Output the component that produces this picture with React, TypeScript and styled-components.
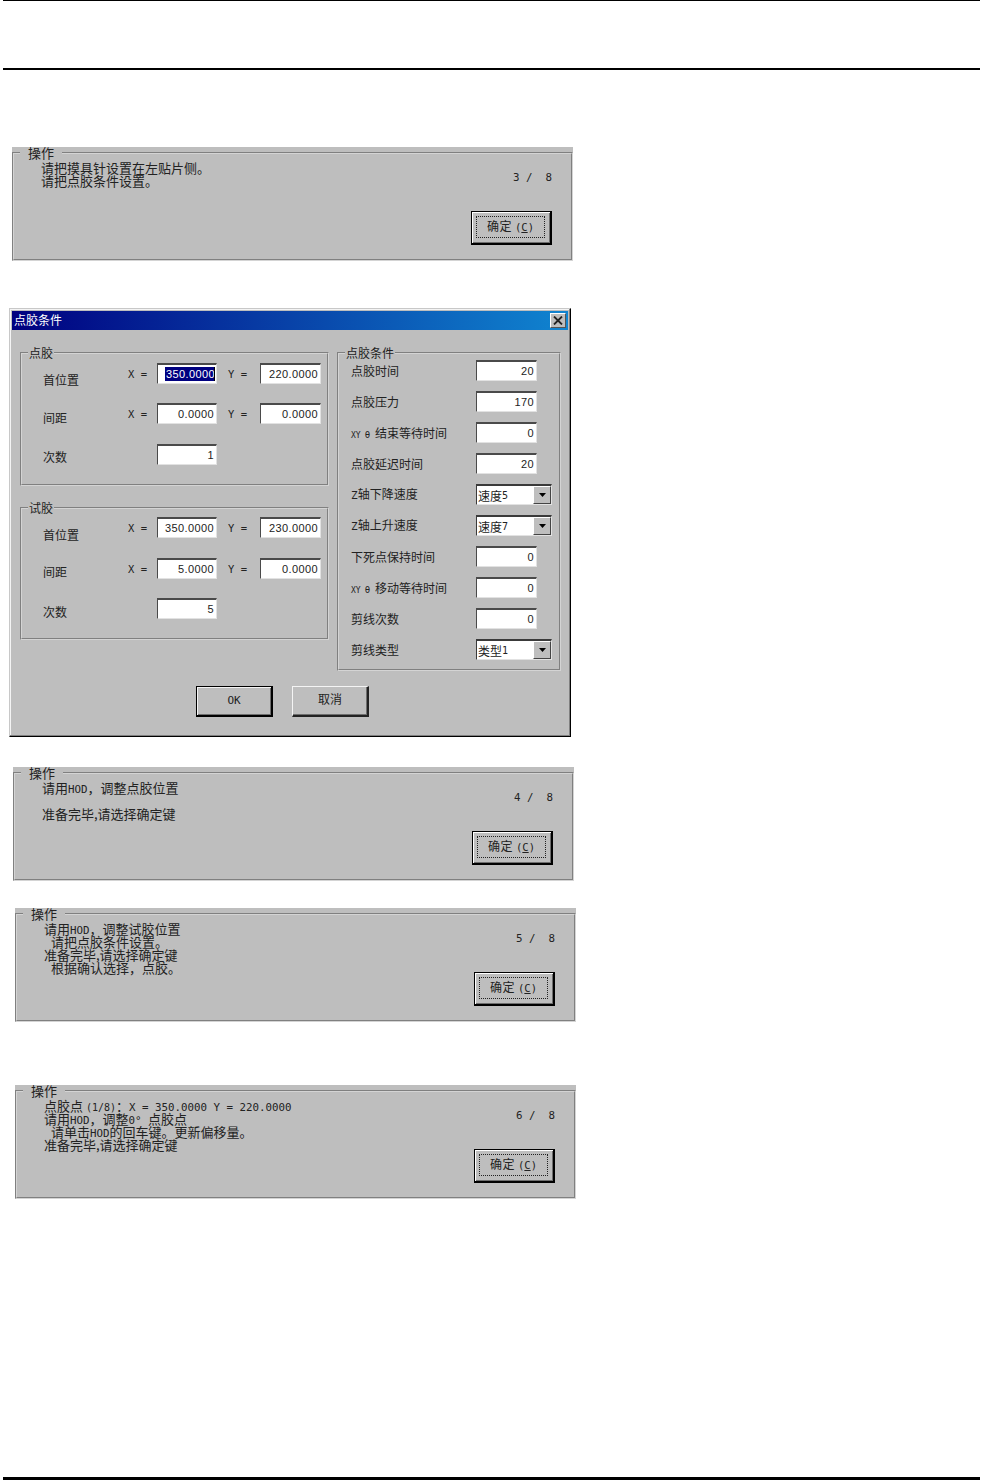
import React from 'react';
import styled, { createGlobalStyle } from 'styled-components';

const GRAY = '#bebebe';
const CJK = '"Noto Sans CJK SC", sans-serif';
const MONO = '"DejaVu Sans Mono", "Noto Sans CJK SC", monospace';
const SANS = '"Liberation Sans", "Noto Sans CJK SC", sans-serif';

const GlobalStyle = createGlobalStyle`
  html, body { margin: 0; padding: 0; background: #fff; }
  body { font-family: ${CJK}; color: #222; }
`;

const Page = styled.div`
  width: 982px;
  height: 1480px;
  display: flex;
  flex-direction: column;
  overflow: hidden;
`;

const Rule = styled.div<{ $size: number; $top?: number; $push?: boolean }>`
  flex: none;
  width: 977px;
  height: ${({ $size }) => $size}px;
  margin-left: 3px;
  margin-top: ${({ $push, $top }) => ($push ? 'auto' : `${$top ?? 0}px`)};
  background: #000;
`;

/* Operation panels */
const Panel = styled.div<{ $left: number; $top: number }>`
  flex: none;
  box-sizing: border-box;
  width: 561px;
  height: 114px;
  margin-left: ${({ $left }) => $left}px;
  margin-top: ${({ $top }) => $top}px;
  background: ${GRAY};
`;

const PanelFrame = styled.fieldset`
  box-sizing: border-box;
  height: 100%;
  min-width: 0;
  margin: 0;
  padding: 0;
  display: flex;
  justify-content: space-between;
  border: 2px groove #d4d4d4;
`;

const PanelLegend = styled.legend`
  margin-left: 6px;
  padding: 0 8px;
  font-size: 13px;
  line-height: 12px;
`;

const Message = styled.div`
  padding: 2px 0 0 27px;
  display: flex;
  flex-direction: column;
  font-size: 13px;
  line-height: 13px;
  white-space: pre;
`;

const MessageLine = styled.div<{ $indent?: boolean }>`
  height: 13px;
  padding-left: ${({ $indent }) => ($indent ? 7 : 0)}px;
`;

const Mono = styled.span<{ $size?: number; $underline?: boolean }>`
  font-family: ${MONO};
  font-size: ${({ $size }) => $size ?? 10.8}px;
  letter-spacing: 0;
  text-decoration: ${({ $underline }) => ($underline ? 'underline' : 'none')};
`;

const Theta = styled(Mono)`
  margin: 0 5px 0 4px;
`;

const PanelAside = styled.div`
  display: flex;
  flex-direction: column;
  align-items: flex-end;
  justify-content: space-between;
  padding: 12px 19px 14px 0;
`;

const Counter = styled.div`
  font-family: ${MONO};
  font-size: 10.8px;
  line-height: 14px;
  white-space: pre;
`;

const ConfirmButton = styled.button`
  box-sizing: border-box;
  width: 81px;
  height: 34px;
  padding: 4px 5px 5px 4px;
  display: flex;
  border: 1px solid #000;
  border-bottom-width: 2px;
  border-right-width: 2px;
  background: ${GRAY};
  box-shadow: inset 1px 1px #fff, inset -1px -1px #6e6e6e;
  color: #222;
  font-family: ${CJK};
  font-size: 12px;
  letter-spacing: 0.5px;
  line-height: 14px;
`;

const ConfirmFocus = styled.span`
  flex: 1;
  padding-bottom: 2px;
  display: flex;
  align-items: center;
  justify-content: center;
  gap: 3px;
  border: 1px dotted #222;
`;

/* Dialog */
const Dialog = styled.div`
  flex: none;
  box-sizing: border-box;
  width: 562px;
  height: 429px;
  margin-left: 9px;
  margin-top: 47px;
  padding: 2px;
  display: flex;
  flex-direction: column;
  border: 1px solid;
  border-color: #c8c8c8 #000 #000 #c8c8c8;
  background: ${GRAY};
  box-shadow: inset -1px -1px #808080, inset 1px 1px #f4f4f4;
`;

const TitleBar = styled.div`
  flex: none;
  box-sizing: border-box;
  height: 19px;
  padding: 0 2px;
  display: flex;
  align-items: center;
  justify-content: space-between;
  background: linear-gradient(90deg, #000080, #1084d0);
  color: #fff;
  font-size: 12px;
  line-height: 15px;
`;

const TitleText = styled.span`
  padding-bottom: 2px;
`;

const CloseButton = styled.div`
  width: 16px;
  height: 15px;
  box-sizing: border-box;
  display: flex;
  align-items: center;
  justify-content: center;
  background: ${GRAY};
  border: 1px solid;
  border-color: #fff #555 #555 #fff;
`;

const DialogBody = styled.div`
  flex: 1;
  padding: 16px 7px 0 8px;
  display: flex;
  flex-direction: column;
`;

const Columns = styled.div`
  display: flex;
  gap: 8px;
`;

const LeftColumn = styled.div`
  flex: none;
  display: flex;
  flex-direction: column;
  gap: 15px;
  width: 309px;
`;

const Group = styled.fieldset<{ $height: number; $width?: number }>`
  flex: none;
  box-sizing: border-box;
  width: ${({ $width }) => ($width ? `${$width}px` : 'auto')};
  height: ${({ $height }) => $height}px;
  min-width: 0;
  margin: 0;
  padding: 0;
  border: 2px groove #d4d4d4;
`;

const GroupLegend = styled.legend`
  margin-left: 6px;
  padding: 0 1px;
  font-size: 12px;
  line-height: 14px;
`;

const PointRows = styled.div`
  padding-left: 21px;
`;

const PointRow = styled.div<{ $top: number }>`
  display: flex;
  align-items: center;
  height: 21px;
  margin-top: ${({ $top }) => $top}px;
`;

const RowLabel = styled.div<{ $drop: number }>`
  align-self: flex-start;
  width: 85px;
  padding-top: ${({ $drop }) => $drop}px;
  font-size: 12px;
  line-height: 14px;
  white-space: nowrap;
`;

const Axis = styled.div<{ $width: number; $indent?: number }>`
  box-sizing: border-box;
  width: ${({ $width }) => $width}px;
  padding-left: ${({ $indent }) => $indent ?? 0}px;
  font-family: ${MONO};
  font-size: 10.5px;
  white-space: pre;
`;

const Field = styled.div<{ $width?: number }>`
  flex: none;
  box-sizing: border-box;
  width: ${({ $width }) => $width ?? 61}px;
  height: 21px;
  padding-right: 2px;
  display: flex;
  align-items: center;
  justify-content: flex-end;
  overflow: hidden;
  border-style: solid;
  border-width: 2px 1px 1px 1px;
  border-color: #4a4a4a #e2e2e2 #e2e2e2 #4a4a4a;
  background: #fff;
  font-family: ${SANS};
  font-size: 11px;
  letter-spacing: 0.4px;
`;

const Selected = styled.span`
  display: block;
  flex: none;
  box-sizing: border-box;
  width: 50px;
  height: 14px;
  margin-right: -1px;
  padding-left: 1px;
  line-height: 14px;
  overflow: hidden;
  white-space: nowrap;
  background: #000080;
  color: #fff;
  border-right: 1px solid #000;
`;

const SettingsRows = styled.div`
  padding-left: 12px;
  display: flex;
  flex-direction: column;
  gap: 10px;
`;

const SettingRow = styled.div`
  display: flex;
  align-items: center;
  height: 21px;
`;

const SettingLabel = styled.div`
  width: 125px;
  font-size: 12px;
  line-height: 14px;
  white-space: pre;
`;

const XySettingLabel = styled(SettingLabel)`
  padding-top: 3px;
`;

const Combo = styled.div`
  box-sizing: border-box;
  width: 76px;
  height: 21px;
  display: flex;
  align-items: stretch;
  border-style: solid;
  border-width: 2px 1px 1px 1px;
  border-color: #3a3a3a #e2e2e2 #e2e2e2 #3a3a3a;
  background: #fff;
  font-size: 12px;
`;

const ComboValue = styled.div`
  flex: 1;
  padding-left: 1px;
  display: flex;
  align-items: center;
  white-space: pre;
`;

const ComboArrow = styled.div`
  width: 16px;
  display: flex;
  align-items: center;
  justify-content: center;
  background: ${GRAY};
  border: 1px solid;
  border-color: #fff #444 #444 #fff;
`;

const DialogActions = styled.div`
  margin-top: 15px;
  padding-left: 176px;
  display: flex;
  gap: 19px;
`;

const DialogButton = styled.button<{ $isDefault?: boolean }>`
  box-sizing: border-box;
  width: 77px;
  height: 31px;
  padding: 0 0 5px;
  border: 1px solid;
  border-color: ${({ $isDefault }) => ($isDefault ? '#000' : '#f4f4f4 #222 #222 #f4f4f4')};
  border-bottom-width: 2px;
  border-right-width: 2px;
  background: ${GRAY};
  box-shadow: ${({ $isDefault }) =>
    $isDefault ? 'inset 1px 1px #f4f4f4, inset -1px -1px #6e6e6e' : 'inset -1px -1px #6e6e6e'};
  color: #222;
  font-family: ${CJK};
  font-size: 12px;
`;

const Arrow = () => (
  <svg width="7" height="4" viewBox="0 0 7 4">
    <polygon points="0,0 7,0 3.5,4" fill="#000" />
  </svg>
);

const CloseIcon = () => (
  <svg width="10" height="9" viewBox="0 0 10 9">
    <path d="M1 0.5 L9 8.5 M9 0.5 L1 8.5" stroke="#222" strokeWidth="1.8" fill="none" />
  </svg>
);

interface IOperationPanelProps {
  left: number;
  top: number;
  step: string;
  children: React.ReactNode;
}

const OperationPanel = ({ left, top, step, children }: IOperationPanelProps) => (
  <Panel $left={left} $top={top}>
    <PanelFrame>
      <PanelLegend>操作</PanelLegend>
      <Message>{children}</Message>
      <PanelAside>
        <Counter>{step}</Counter>
        <ConfirmButton>
          <ConfirmFocus>
            确定
            <span>
              <Mono $size={10.5}>(</Mono>
              <Mono $size={10.5} $underline>C</Mono>
              <Mono $size={10.5}>)</Mono>
            </span>
          </ConfirmFocus>
        </ConfirmButton>
      </PanelAside>
    </PanelFrame>
  </Panel>
);

const XyLabel = ({ text }: { text: string }) => (
  <XySettingLabel>
    <Mono $size={8}>XY</Mono>
    <Theta $size={9}>θ</Theta>
    {text}
  </XySettingLabel>
);

const ZLabel = ({ text }: { text: string }) => (
  <SettingLabel>
    <Mono $size={11}>Z</Mono>
    {text}
  </SettingLabel>
);

interface ICoordRowProps {
  label: string;
  x: React.ReactNode;
  y: string;
  top: number;
  drop: number;
}

const CoordRow = ({ label, x, y, top, drop }: ICoordRowProps) => (
  <PointRow $top={top}>
    <RowLabel $drop={drop}>{label}</RowLabel>
    <Axis $width={29}>X =</Axis>
    <Field $width={60}>{x}</Field>
    <Axis $width={43} $indent={11}>
      Y =
    </Axis>
    <Field>{y}</Field>
  </PointRow>
);

const CountRow = ({ value, top, drop }: { value: string; top: number; drop: number }) => (
  <PointRow $top={top}>
    <RowLabel $drop={drop}>次数</RowLabel>
    <Axis $width={29} />
    <Field $width={60}>{value}</Field>
  </PointRow>
);

const App = () => (
  <Page>
    <GlobalStyle />
    <Rule $size={1} />
    <Rule $size={2} $top={67} />

    <OperationPanel left={12} top={77} step={'3 /  8'}>
      <MessageLine>请把摸具针设置在左贴片侧。</MessageLine>
      <MessageLine>请把点胶条件设置。</MessageLine>
    </OperationPanel>

    <Dialog>
      <TitleBar>
        <TitleText>点胶条件</TitleText>
        <CloseButton>
          <CloseIcon />
        </CloseButton>
      </TitleBar>
      <DialogBody>
        <Columns>
          <LeftColumn>
            <Group $height={140}>
              <GroupLegend>点胶</GroupLegend>
              <PointRows>
                <CoordRow label="首位置" x={<Selected>350.0000</Selected>} y="220.0000" top={3} drop={10} />
                <CoordRow label="间距" x="0.0000" y="0.0000" top={19} drop={8} />
                <CountRow value="1" top={20} drop={6} />
              </PointRows>
            </Group>
            <Group $height={139}>
              <GroupLegend>试胶</GroupLegend>
              <PointRows>
                <CoordRow label="首位置" x="350.0000" y="230.0000" top={2} drop={11} />
                <CoordRow label="间距" x="5.0000" y="0.0000" top={20} drop={7} />
                <CountRow value="5" top={19} drop={7} />
              </PointRows>
            </Group>
          </LeftColumn>
          <Group $height={325} $width={224}>
            <GroupLegend>点胶条件</GroupLegend>
            <SettingsRows>
              <SettingRow>
                <SettingLabel>点胶时间</SettingLabel>
                <Field>20</Field>
              </SettingRow>
              <SettingRow>
                <SettingLabel>点胶压力</SettingLabel>
                <Field>170</Field>
              </SettingRow>
              <SettingRow>
                <XyLabel text="结束等待时间" />
                <Field>0</Field>
              </SettingRow>
              <SettingRow>
                <SettingLabel>点胶延迟时间</SettingLabel>
                <Field>20</Field>
              </SettingRow>
              <SettingRow>
                <ZLabel text="轴下降速度" />
                <Combo>
                  <ComboValue>
                    速度<Mono $size={10}>5</Mono>
                  </ComboValue>
                  <ComboArrow>
                    <Arrow />
                  </ComboArrow>
                </Combo>
              </SettingRow>
              <SettingRow>
                <ZLabel text="轴上升速度" />
                <Combo>
                  <ComboValue>
                    速度<Mono $size={10}>7</Mono>
                  </ComboValue>
                  <ComboArrow>
                    <Arrow />
                  </ComboArrow>
                </Combo>
              </SettingRow>
              <SettingRow>
                <SettingLabel>下死点保持时间</SettingLabel>
                <Field>0</Field>
              </SettingRow>
              <SettingRow>
                <XyLabel text="移动等待时间" />
                <Field>0</Field>
              </SettingRow>
              <SettingRow>
                <SettingLabel>剪线次数</SettingLabel>
                <Field>0</Field>
              </SettingRow>
              <SettingRow>
                <SettingLabel>剪线类型</SettingLabel>
                <Combo>
                  <ComboValue>
                    类型<Mono $size={10}>1</Mono>
                  </ComboValue>
                  <ComboArrow>
                    <Arrow />
                  </ComboArrow>
                </Combo>
              </SettingRow>
            </SettingsRows>
          </Group>
        </Columns>
        <DialogActions>
          <DialogButton $isDefault>
            <Mono $size={11}>OK</Mono>
          </DialogButton>
          <DialogButton>取消</DialogButton>
        </DialogActions>
      </DialogBody>
    </Dialog>

    <OperationPanel left={13} top={30} step={'4 /  8'}>
      <MessageLine>
        请用<Mono>HOD</Mono>，调整点胶位置
      </MessageLine>
      <MessageLine />
      <MessageLine>准备完毕,请选择确定键</MessageLine>
    </OperationPanel>

    <OperationPanel left={15} top={27} step={'5 /  8'}>
      <MessageLine>
        请用<Mono>HOD</Mono>，调整试胶位置
      </MessageLine>
      <MessageLine $indent>请把点胶条件设置。</MessageLine>
      <MessageLine>准备完毕,请选择确定键</MessageLine>
      <MessageLine $indent>根据确认选择，点胶。</MessageLine>
    </OperationPanel>

    <OperationPanel left={15} top={63} step={'6 /  8'}>
      <MessageLine>
        点胶点 <Mono $size={10}>(1/8)</Mono>：<Mono>X = 350.0000 Y = 220.0000</Mono>
      </MessageLine>
      <MessageLine>
        请用<Mono>HOD</Mono>，调整<Mono>0° </Mono>点胶点
      </MessageLine>
      <MessageLine $indent>
        请单击<Mono>HOD</Mono>的回车键。更新偏移量。
      </MessageLine>
      <MessageLine>准备完毕,请选择确定键</MessageLine>
    </OperationPanel>

    <Rule $size={3} $push />
  </Page>
);

export default App;
